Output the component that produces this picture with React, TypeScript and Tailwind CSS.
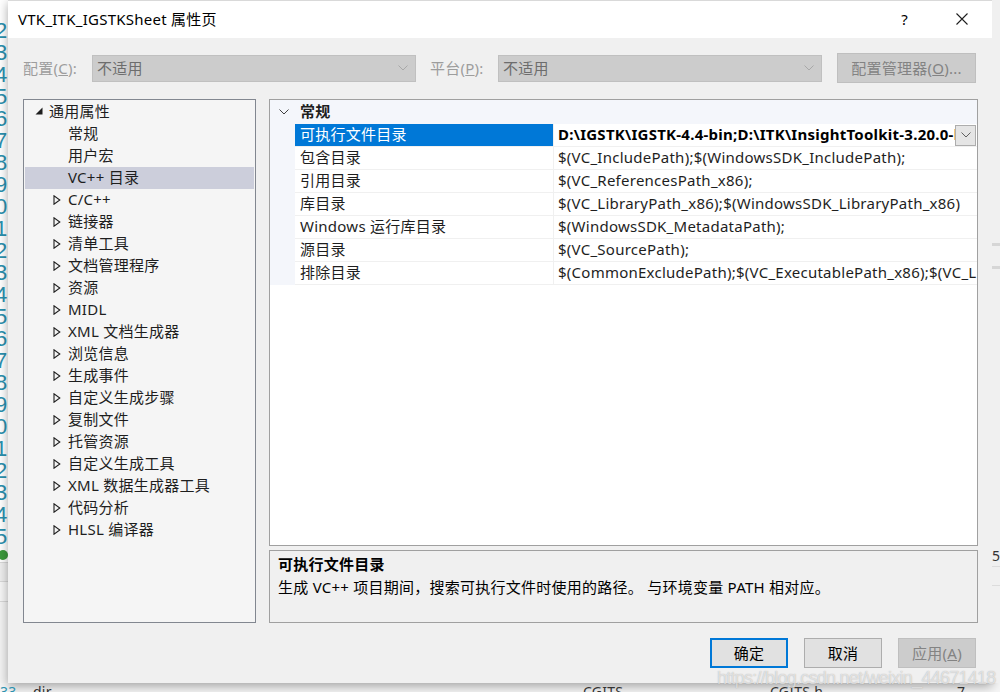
const treeChildren = ['常规', '用户宏', 'VC++ 目录']

const treeCollapsed = [
  'C/C++',
  '链接器',
  '清单工具',
  '文档管理程序',
  '资源',
  'MIDL',
  'XML 文档生成器',
  '浏览信息',
  '生成事件',
  '自定义生成步骤',
  '复制文件',
  '托管资源',
  '自定义生成工具',
  'XML 数据生成器工具',
  '代码分析',
  'HLSL 编译器',
]

const gridRows = [
  { name: '包含目录', value: '$(VC_IncludePath);$(WindowsSDK_IncludePath);' },
  { name: '引用目录', value: '$(VC_ReferencesPath_x86);' },
  { name: '库目录', value: '$(VC_LibraryPath_x86);$(WindowsSDK_LibraryPath_x86)' },
  { name: 'Windows 运行库目录', value: '$(WindowsSDK_MetadataPath);' },
  { name: '源目录', value: '$(VC_SourcePath);' },
  { name: '排除目录', value: '$(CommonExcludePath);$(VC_ExecutablePath_x86);$(VC_LibraryPath_x86);' },
]

const lineNumbers = ['2', '3', '4', '5', '6', '7', '8', '9', '0', '1', '2', '3', '4', '5', '6', '7', '8', '9', '0', '1', '2', '3', '4', '5']

function Chevron({ className = '' }: { className?: string }) {
  return (
    <svg className={className} width="10" height="6" viewBox="0 0 10 6" fill="none">
      <path d="M0.5 0.5L5 5L9.5 0.5" stroke="currentColor" strokeWidth="1" />
    </svg>
  )
}

function CollapsedArrow() {
  return (
    <svg width="8" height="10" viewBox="0 0 8 10" fill="none">
      <path d="M1 0.8V9.2L6.8 5Z" stroke="#1e1e1e" strokeWidth="1.1" strokeLinejoin="miter" />
    </svg>
  )
}

function ExpandedArrow() {
  return (
    <svg width="8" height="8" viewBox="0 0 8 8">
      <path d="M7.5 0.5V7.5H0.5Z" fill="#1e1e1e" />
    </svg>
  )
}

function Select() {
  return (
    <div className="w-[324px] h-[27px] shrink-0 bg-[#cccccc] border border-[#c0c0c0] flex items-center pl-[4px] pr-[7px] text-[#6d6d6d]">
      <span className="flex-1">不适用</span>
      <Chevron className="text-[#a8a8a8]" />
    </div>
  )
}

function Tree() {
  return (
    <div className="w-[233px] shrink-0 border border-[#828790] bg-[#f5f5f5] pt-[1px] px-[1px] text-[#1e1e1e] whitespace-nowrap">
      <div className="h-[22px] flex items-center pb-[2px]">
        <span className="w-[24px] flex justify-end pr-[6px] -mt-[1px]">
          <ExpandedArrow />
        </span>
        <span>通用属性</span>
      </div>
      {treeChildren.map((t, i) => (
        <div
          key={t}
          className={`h-[22px] flex items-center pl-[43px] pb-[2px] ${i === 2 ? 'bg-[#cccedb]' : ''}`}
        >
          {t}
        </div>
      ))}
      {treeCollapsed.map((t) => (
        <div key={t} className="h-[22px] flex items-center pb-[2px]">
          <span className="w-[43px] flex justify-start pl-[28px] pt-[1px]">
            <CollapsedArrow />
          </span>
          <span>{t}</span>
        </div>
      ))}
    </div>
  )
}

function Grid() {
  return (
    <div className="h-[447px] border border-[#a0a0a0] bg-white overflow-hidden text-[#1e1e1e]">
      <div className="h-[24px] bg-[#f4f6fb] flex items-center pb-[2px]">
        <span className="w-[25px] flex justify-center pl-[2px] pt-[1px] text-[#404040]">
          <Chevron />
        </span>
        <span className="font-bold pl-[5px]">常规</span>
      </div>
      <div className="flex">
        <div className="w-[25px] shrink-0 bg-[#f4f6fb]" />
        <div className="flex-1 min-w-0">
          <div className="h-[23px] flex border-b border-[#f0f0f0]">
            <div className="w-[258px] shrink-0 bg-[#0078d7] text-white pl-[5px] pb-[2px] flex items-center">
              可执行文件目录
            </div>
            <div className="flex-1 min-w-0 flex items-center border-l border-[#f0f0f0]">
              <span className="flex-1 min-w-0 overflow-hidden whitespace-nowrap font-bold pl-[4px] pb-[2px] text-black">
                D:\IGSTK\IGSTK-4.4-bin;D:\ITK\InsightToolkit-3.20.0-bin;$(ExecutablePath)
              </span>
              <span className="w-[21px] h-[21px] shrink-0 bg-[#e5e5e5] border border-[#adadad] flex items-center justify-center text-[#606060] mr-[1px]">
                <Chevron />
              </span>
            </div>
          </div>
          {gridRows.map((r) => (
            <div key={r.name} className="h-[23px] flex border-b border-[#f0f0f0]">
              <div className="w-[258px] shrink-0 pl-[5px] pb-[2px] flex items-center whitespace-nowrap">{r.name}</div>
              <div className="flex-1 min-w-0 overflow-hidden whitespace-nowrap flex items-center pl-[4px] pb-[2px] border-l border-[#f0f0f0]">
                {r.value}
              </div>
            </div>
          ))}
        </div>
      </div>
    </div>
  )
}

function Dialog() {
  return (
    <div className="w-[984px] h-[683px] shrink-0 flex flex-col bg-[#f0f0f0] border-t border-[#d9d9d9] shadow-[0_3px_10px_rgba(0,0,0,0.35)]">
      <div className="h-[37px] bg-white flex items-center pl-[10px] pr-[24px] pb-[2px] text-black">
        <span className="flex-1">VTK_ITK_IGSTKSheet 属性页</span>
        <span className="mr-[48px] text-[15px]">?</span>
        <svg width="12" height="12" viewBox="0 0 12 12" fill="none">
          <path d="M0.5 0.5L11.5 11.5M11.5 0.5L0.5 11.5" stroke="#1e1e1e" strokeWidth="1.1" />
        </svg>
      </div>

      <div className="mt-[15px] h-[30px] flex items-center px-[15px] text-[#9d9d9d] whitespace-nowrap">
        <span className="w-[69px] shrink-0">
          配置(<span className="underline">C</span>):
        </span>
        <Select />
        <span className="ml-[14px] w-[68px] shrink-0">
          平台(<span className="underline">P</span>):
        </span>
        <Select />
        <div className="ml-[15px] w-[139px] h-[30px] shrink-0 bg-[#cccccc] border border-[#bfbfbf] flex items-center justify-center text-[#838383]">
          配置管理器(<span className="underline">O</span>)...
        </div>
      </div>

      <div className="mt-[16px] h-[524px] flex gap-[13px] pl-[15px] pr-[14px]">
        <Tree />
        <div className="flex-1 min-w-0 flex flex-col gap-[4px]">
          <Grid />
          <div className="flex-1 border border-[#a0a0a0] bg-[#f0f0f0] px-[8px] pt-[2px] text-black">
            <div className="h-[22px] flex items-center font-bold">可执行文件目录</div>
            <div className="h-[24px] flex items-center">
              生成 VC++ 项目期间，搜索可执行文件时使用的路径。 与环境变量 PATH 相对应。
            </div>
          </div>
        </div>
      </div>

      <div className="mt-[15px] flex justify-end gap-[16px] pr-[16px]">
        <div className="w-[78px] h-[30px] bg-[#e1e1e1] border-2 border-[#0078d7] flex items-center justify-center text-black">
          确定
        </div>
        <div className="w-[78px] h-[30px] bg-[#e1e1e1] border border-[#adadad] flex items-center justify-center text-black">
          取消
        </div>
        <div className="w-[78px] h-[30px] bg-[#cccccc] border border-[#bfbfbf] flex items-center justify-center text-[#838383]">
          应用(<span className="underline">A</span>)
        </div>
      </div>
    </div>
  )
}

export default function App() {
  return (
    <div className="relative w-[1000px] h-[692px] overflow-hidden bg-[#f5f5f5] font-['Noto_Sans','Noto_Sans_CJK_SC',sans-serif] text-[15px] leading-[20px] tracking-[0.25px]">
      <div className="flex h-[683px]">
        <div className="w-[8px] shrink-0 overflow-hidden bg-white flex flex-col">
          <div className="h-[548px] pt-[20px] -ml-[5px] text-[22px] leading-[22px] text-[#2b91af] font-['Liberation_Sans',sans-serif]">
            {lineNumbers.map((n, i) => (
              <div key={i}>{n}</div>
            ))}
          </div>
          <div className="h-[14px] flex items-center">
            <span className="w-[10px] h-[10px] rounded-full bg-[#3c9a3c] -ml-[2px]" />
          </div>
          <div className="h-[20px] bg-[#eeeeee] border-y border-[#d8d8d8]" />
          <div className="h-[20px] bg-[#f6f6f6] border-b border-[#d8d8d8]" />
          <div className="flex-1 bg-[#f3f3f3]" />
        </div>
        <Dialog />
        <div className="w-[8px] shrink-0 bg-[#f0f0f0] flex flex-col">
          <div className="h-[243px]" />
          <div className="h-[3px] bg-[#d6d6d6]" />
          <div className="h-[20px]" />
          <div className="h-[3px] bg-[#d6d6d6]" />
          <div className="h-[277px]" />
          <div className="h-[20px] text-[14px] text-[#333]">5</div>
          <div className="h-[20px] border-y border-[#dcdcdc]" />
          <div className="flex-1" />
        </div>
      </div>
      <div className="h-[9px] overflow-hidden flex text-[14px] leading-[18px] text-[#333] bg-[#f5f5f5]">
        <span className="w-[33px] text-[#2b91af]">33</span>
        <span className="w-[550px]">dir</span>
        <span className="w-[187px]">CGITS</span>
        <span className="w-[187px]">CGITS.h</span>
        <span>7</span>
      </div>
      <div className="absolute left-[717px] top-[666px] text-[18px] leading-[24px] tracking-[-0.75px] font-['Liberation_Sans',sans-serif] text-white/60 [text-shadow:0_0_1px_rgba(110,110,110,0.55)] whitespace-nowrap pointer-events-none">
        https://blog.csdn.net/weixin_44671418
      </div>
    </div>
  )
}
